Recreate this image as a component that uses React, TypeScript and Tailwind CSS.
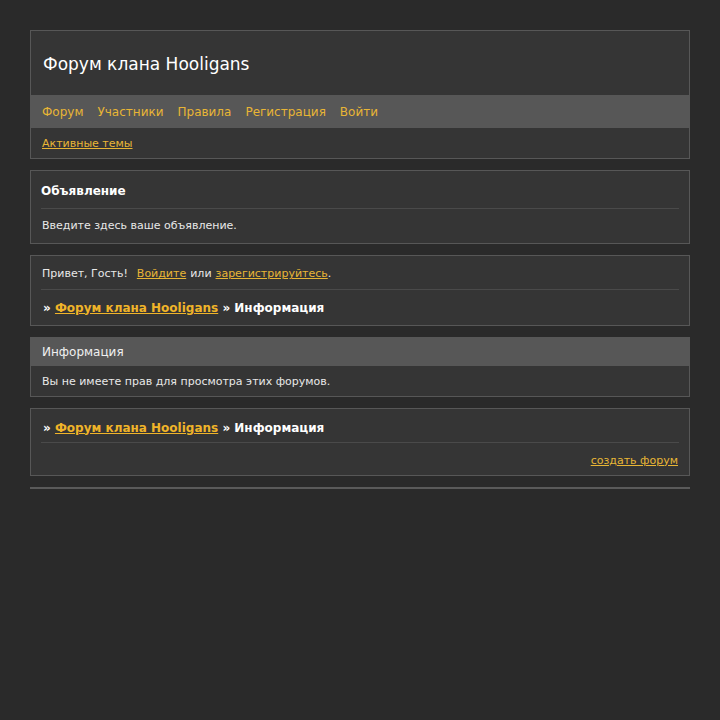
const font = { fontFamily: '"DejaVu Sans", Verdana, sans-serif' };

function Crumbs() {
  return (
    <div className="text-[12px] font-bold text-white">
      <span>» </span>
      <a href="#" className="text-[#f0b429] underline">
        Форум клана Hooligans
      </a>
      <span> » Информация</span>
    </div>
  );
}

export default function App() {
  return (
    <div className="min-h-[720px] bg-[#2a2a2a] px-[30px] pt-[30px]" style={font}>
      <div className="border border-[#575757] bg-[#353535]">
        <div className="flex h-[64px] items-center px-[12px] pt-[3px] text-[17px] text-white">
          Форум клана Hooligans
        </div>
        <nav className="flex h-[33px] items-center gap-[14px] bg-[#575757] px-[11px] pt-[1px] text-[12px] text-[#e8b535]">
          {['Форум', 'Участники', 'Правила', 'Регистрация', 'Войти'].map((l) => (
            <a key={l} href="#">
              {l}
            </a>
          ))}
        </nav>
        <div className="flex h-[30px] items-center px-[11px] pt-[2px] text-[11px]">
          <a href="#" className="text-[#e8b535] underline">
            Активные темы
          </a>
        </div>
      </div>

      <div className="mt-[11px] border border-[#575757] bg-[#353535] px-[10px]">
        <div className="flex h-[38px] items-center border-b border-[#4a4a4a] pt-[2px] text-[12px] font-bold text-white">
          Объявление
        </div>
        <div className="flex h-[34px] items-center px-[1px] text-[11px] text-[#e8e8e8]">
          Введите здесь ваше объявление.
        </div>
      </div>

      <div className="mt-[11px] border border-[#575757] bg-[#353535] px-[10px]">
        <div className="flex h-[34px] items-center border-b border-[#4a4a4a] px-[1px] pt-[4px] text-[11px] text-[#e8e8e8]">
          <span>Привет, Гость!</span>
          <a href="#" className="ml-[9px] text-[#e8b535] underline">
            Войдите
          </a>
          <span className="mx-[4px]">или</span>
          <a href="#" className="text-[#e8b535] underline">
            зарегистрируйтесь
          </a>
          <span>.</span>
        </div>
        <div className="flex h-[35px] items-center px-[2px]">
          <Crumbs />
        </div>
      </div>

      <div className="mt-[11px] border border-[#575757] bg-[#353535]">
        <div className="flex h-[28px] items-center bg-[#575757] px-[11px] text-[12px] text-[#f0f0f0]">
          Информация
        </div>
        <div className="flex h-[30px] items-center px-[11px] pt-[3px] text-[11px] text-[#e8e8e8]">
          Вы не имеете прав для просмотра этих форумов.
        </div>
      </div>

      <div className="mt-[11px] border border-[#575757] bg-[#353535] px-[10px]">
        <div className="flex h-[34px] items-center border-b border-[#4a4a4a] px-[2px] pt-[4px]">
          <Crumbs />
        </div>
        <div className="flex h-[32px] items-center justify-end px-[1px] pt-[4px] text-[11px]">
          <a href="#" className="text-[#e8b535] underline">
            создать форум
          </a>
        </div>
      </div>

      <div className="mt-[11px] h-[2px] bg-[#5a5a5a]" />
    </div>
  );
}
